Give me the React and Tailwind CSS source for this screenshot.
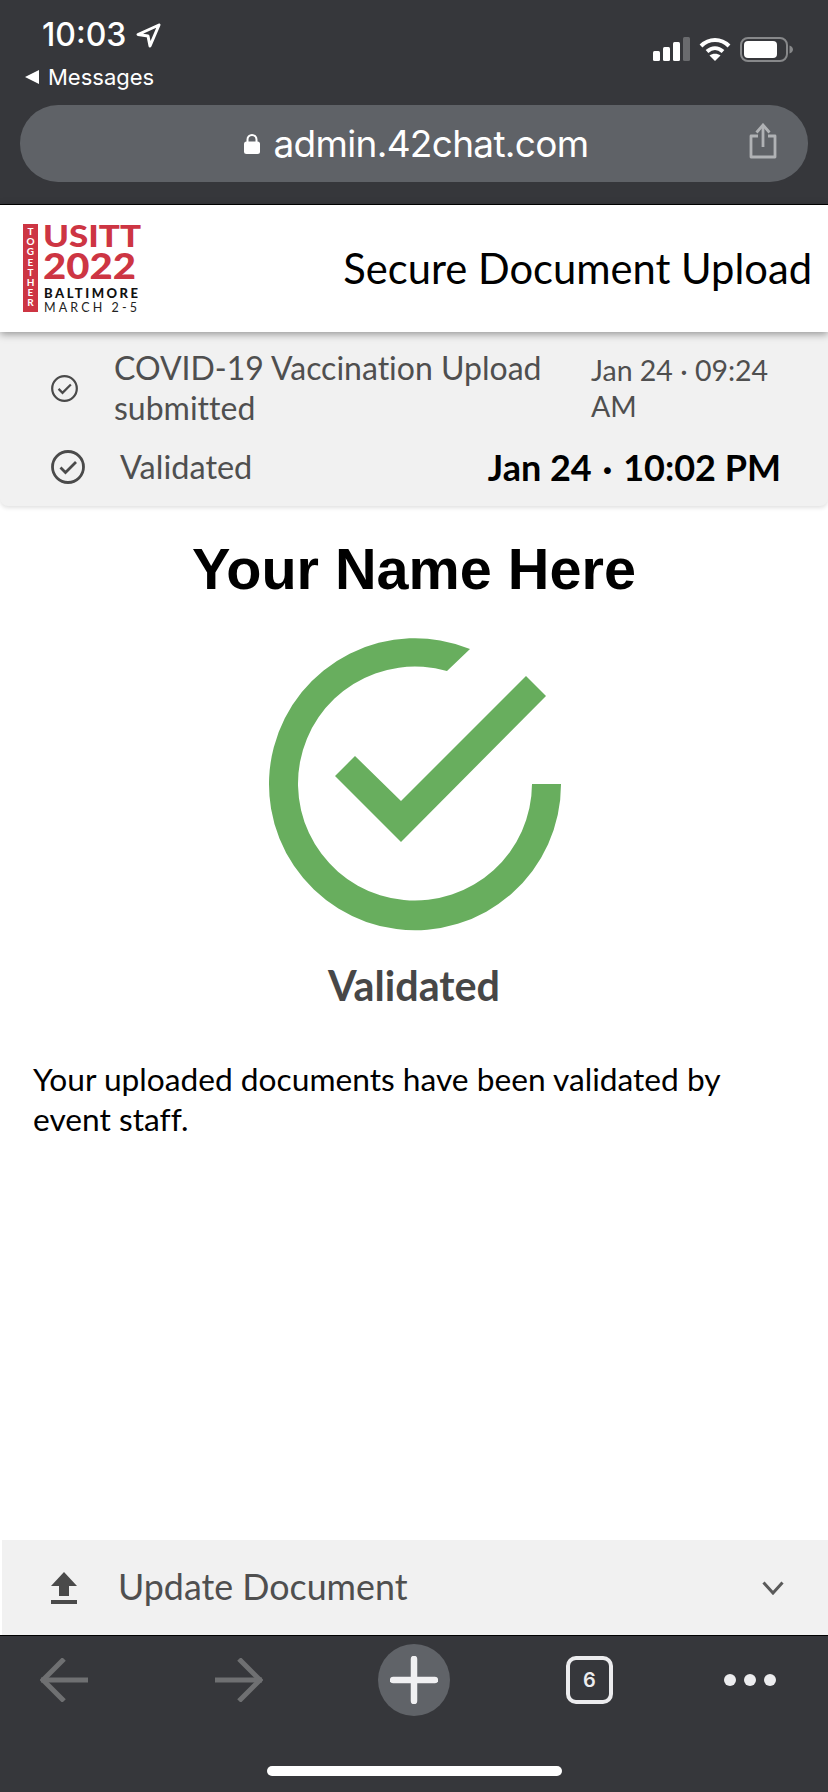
const lato = "font-['Lato',sans-serif] [font-variant-ligatures:none]";
const sys = "font-['Inter',sans-serif]";

function LocationArrow() {
  return (
    <svg width="25" height="25" viewBox="0 0 25 25" fill="none">
      <path d="M23 2 L2 11.5 L12 13 L14 23 Z" stroke="#fff" strokeWidth="3" strokeLinejoin="round" />
    </svg>
  );
}

function StatusIcons() {
  return (
    <div className="flex items-center gap-[9px]">
      <svg width="37" height="25" viewBox="0 0 37 25">
        <rect x="0" y="14" width="7" height="10" rx="1.5" fill="#fff" />
        <rect x="10" y="10" width="7" height="14" rx="1.5" fill="#fff" />
        <rect x="20" y="5" width="7" height="19" rx="1.5" fill="#fff" />
        <rect x="30" y="0" width="7" height="24" rx="1.5" fill="#6a6b6e" />
      </svg>
      <svg width="32" height="25" viewBox="0 0 32 25" fill="none" stroke="#fff" strokeWidth="4">
        <path d="M2 9 C10 1 22 1 30 9" />
        <path d="M8 14.5 C13 10 19 10 24 14.5" />
        <path d="M16 24 L10.5 18.5 C13.5 16 18.5 16 21.5 18.5 Z" fill="#fff" stroke="none" />
      </svg>
      <svg width="54" height="25" viewBox="0 0 54 25">
        <rect x="1" y="1" width="46" height="23" rx="7" fill="none" stroke="#87888a" strokeWidth="2" />
        <rect x="4" y="4" width="33" height="17" rx="4" fill="#fff" />
        <path d="M49.5 8.5 C52 9.5 53 11 53 12.5 C53 14 52 15.5 49.5 16.5 Z" fill="#87888a" />
      </svg>
    </div>
  );
}

function ShareIcon() {
  return (
    <svg width="28" height="36" viewBox="0 0 28 36" fill="none" stroke="#b0b2b5" strokeWidth="2.8">
      <path d="M9 13 H2 V34 H26 V13 H19" strokeLinejoin="round" />
      <path d="M14 24 V3" />
      <path d="M7.5 9.5 L14 2 L20.5 9.5" />
    </svg>
  );
}

function Logo() {
  const letters = "TOGETHER".split("");
  return (
    <svg width="120" height="90" viewBox="0 0 120 90" className="font-['Lato',sans-serif] overflow-visible">
      <rect x="0" y="0" width="15" height="88" fill="#cd3543" />
      {letters.map((l, i) => (
        <text key={i} x="7.5" y={11 + i * 10.2} textAnchor="middle" fontSize="10" fontWeight="700" fill="#fff">
          {l}
        </text>
      ))}
      <text x="20" y="23" fontSize="30.5" fontWeight="900" fill="#cd3543" textLength="98" lengthAdjust="spacingAndGlyphs">
        USITT
      </text>
      <text x="20" y="55" fontSize="36" fontWeight="900" fill="#cd3543" textLength="93" lengthAdjust="spacingAndGlyphs">
        2022
      </text>
      <text x="21" y="74" fontSize="13" fontWeight="900" fill="#111" textLength="94" lengthAdjust="spacing">
        BALTIMORE
      </text>
      <text x="21" y="88" fontSize="12.5" fontWeight="400" fill="#222" textLength="93" lengthAdjust="spacing">
        MARCH 2-5
      </text>
    </svg>
  );
}

function CheckCircle({ size, stroke }) {
  return (
    <svg width={size} height={size} viewBox="0 0 34 34" fill="none" stroke="#4a4a4a">
      <circle cx="17" cy="17" r="15.5" strokeWidth={stroke} />
      <path d="M9.5 17.5 L14.5 22.5 L25 12" strokeWidth={stroke} />
    </svg>
  );
}

function BigCheck() {
  return (
    <svg width="296" height="296" viewBox="267 637 296 296" fill="#68ae5e">
      <path d="M561 785 A146 146 0 1 1 470 650 L447 672 A117 117 0 1 0 532 785 Z" />
      <path d="M335 777 L355 757 L401 802 L526 677 L546 697 L401 843 Z" />
    </svg>
  );
}

function UploadIcon() {
  return (
    <svg width="26" height="32" viewBox="0 0 26 32" fill="#4a4a4a">
      <path d="M13 0 L26 14 H18 V24 H8 V14 H0 Z" />
      <rect x="0" y="28" width="26" height="4" />
    </svg>
  );
}

function BrowserToolbar() {
  return (
    <div className="flex-1 bg-[#36373b] border-t border-black flex flex-col items-center">
      <div className="w-full flex items-center h-[72px] mt-[8px] pl-[40px] pr-[52px] justify-between">
        <svg width="48" height="44" viewBox="0 0 48 44" fill="none" stroke="#6f7072" strokeWidth="5">
          <path d="M1 22 H48" />
          <path d="M24 1 L3 22 L24 43" />
        </svg>
        <svg width="48" height="44" viewBox="0 0 48 44" fill="none" stroke="#6f7072" strokeWidth="5" className="ml-[127px]">
          <path d="M0 22 H47" />
          <path d="M24 1 L45 22 L24 43" />
        </svg>
        <div className="w-[72px] h-[72px] rounded-full bg-[#606368] flex items-center justify-center ml-[115px]">
          <svg width="48" height="48" viewBox="0 0 48 48" stroke="#f0f0f2" strokeWidth="6.5" strokeLinecap="round">
            <path d="M24 3 V45" />
            <path d="M3 24 H45" />
          </svg>
        </div>
        <div className={`w-[47px] h-[48px] rounded-[10px] border-[4px] border-[#ececee] flex items-center justify-center text-[#ececee] text-[20px] font-semibold ml-[116px] ${sys}`}>
          6
        </div>
        <div className="flex gap-[8px] ml-auto">
          <span className="w-[12px] h-[12px] rounded-full bg-[#ececee]" />
          <span className="w-[12px] h-[12px] rounded-full bg-[#ececee]" />
          <span className="w-[12px] h-[12px] rounded-full bg-[#ececee]" />
        </div>
      </div>
      <div className="mt-[50px] w-[295px] h-[10px] rounded-full bg-white" />
    </div>
  );
}

export default function App() {
  return (
    <div className="w-[828px] h-[1792px] flex flex-col bg-white overflow-hidden">
      <div className="h-[205px] bg-[#36373b] border-b border-black shrink-0">
        <div className="flex items-start justify-between pt-[17px] pl-[42px] pr-[34px]">
          <div className={`flex items-center gap-[10px] text-white text-[32px] font-medium leading-[36px] ${sys}`}>
            10:03 <LocationArrow />
          </div>
          <div className="pt-[20px]">
            <StatusIcons />
          </div>
        </div>
        <div className={`flex items-center gap-[9px] pl-[25px] mt-[2px] text-white text-[22px] leading-[26px] ${sys}`}>
          <span className="w-0 h-0 border-y-[7px] border-y-transparent border-r-[14px] border-r-white" />
          Messages
        </div>
        <div className="mt-[15px] mx-[20px] h-[77px] rounded-[38px] bg-[#5f6267] flex items-center justify-center relative">
          <div className={`flex items-center gap-[14px] text-white text-[37px] tracking-[-0.7px] ml-[4px] ${sys}`}>
            <svg width="16" height="20" viewBox="0 0 16 20" fill="#fff">
              <path d="M3.5 8 V5.5 A4.5 4.5 0 0 1 12.5 5.5 V8" fill="none" stroke="#fff" strokeWidth="2" />
              <rect x="0" y="7.5" width="16" height="12.5" rx="2.5" />
            </svg>
            admin.42chat.com
          </div>
          <div className="absolute right-[31px] top-[18px]">
            <ShareIcon />
          </div>
        </div>
      </div>

      <div className="relative z-10 h-[127px] shrink-0 bg-white shadow-[0_2px_8px_rgba(0,0,0,0.4)] flex items-center justify-between pl-[23px] pr-[16px]">
        <Logo />
        <h1 className={`text-black text-[41.7px] ${lato}`}>Secure Document Upload</h1>
      </div>

      <div className={`h-[174px] shrink-0 bg-[#f1f1f1] rounded-b-[8px] shadow-[0_2px_4px_rgba(0,0,0,0.12)] text-[#4f4f4f] ${lato}`}>
        <div className="flex items-center pt-[16px] pl-[51px]">
          <CheckCircle size={27} stroke={2.8} />
          <div className="w-[513px] pl-[36px] pr-[30px] text-[32px] leading-[40px]">
            COVID-19 Vaccination Upload submitted
          </div>
          <div className="w-[200px] text-[28.5px] leading-[36px]">Jan 24 · 09:24 AM</div>
        </div>
        <div className="flex items-center mt-[12px] pl-[51px] pr-[47px]">
          <CheckCircle size={34} stroke={2.8} />
          <span className="pl-[35px] text-[32.5px]">Validated</span>
          <span className="ml-auto text-[36px] font-bold text-black">
            Jan 24 <span className="mx-[2px]">·</span> 10:02 PM
          </span>
        </div>
      </div>

      <div className="flex-1 flex flex-col items-center">
        <h2 className="mt-[29px] font-['Liberation_Sans',sans-serif] font-bold text-black text-[57.6px] leading-[68px]">
          Your Name Here
        </h2>
        <div className="mt-[33px] ml-[2px]">
          <BigCheck />
        </div>
        <div className={`mt-[23px] text-[41.3px] font-bold text-[#474747] ${lato}`}>Validated</div>
        <p className={`mt-[42px] self-start pl-[33px] pr-[90px] text-[31.7px] leading-[40px] text-black ${lato}`}>
          Your uploaded documents have been validated by event staff.
        </p>
      </div>

      <div className={`h-[95px] ml-[2px] shrink-0 bg-[#f1f1f1] flex items-center pl-[49px] pr-[44px] text-[#4f4f4f] ${lato}`}>
        <UploadIcon />
        <span className="ml-[41px] -mt-[2px] text-[35.8px]">Update Document</span>
        <svg width="22" height="14" viewBox="0 0 22 14" fill="none" stroke="#5a5a5a" strokeWidth="3" className="ml-auto">
          <path d="M1.5 1.5 L11 12 L20.5 1.5" />
        </svg>
      </div>

      <div className="h-[157px] shrink-0 flex flex-col">
        <BrowserToolbar />
      </div>
    </div>
  );
}
